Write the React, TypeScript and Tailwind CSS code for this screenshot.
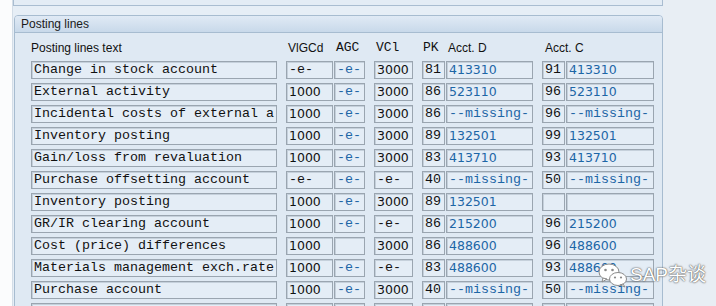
import React from "react"

type Cell = { v: string; blue?: boolean; kind?: "mono" | "num" }

const cols = [
  { w: "w-[246px]", ml: "ml-0" },
  { w: "w-[47px]", ml: "ml-[9px]" },
  { w: "w-[31px]", ml: "ml-[1px]" },
  { w: "w-[39px]", ml: "ml-[9px]" },
  { w: "w-[23px]", ml: "ml-[9px]" },
  { w: "w-[87px]", ml: "ml-[1px]" },
  { w: "w-[23px]", ml: "ml-[9px]" },
  { w: "w-[88px]", ml: "ml-[1px]" },
]

const e = (blue = false): Cell => ({ v: "-e-", blue, kind: "mono" })
const n = (v: string, blue = false): Cell => ({ v, blue, kind: "num" })
const m = (): Cell => ({ v: "--missing-", blue: true, kind: "mono" })
const pk = (v: string): Cell => ({ v, kind: "mono" })
const t = (v: string): Cell => ({ v, kind: "mono" })
const x: Cell = { v: "" }

const rows: Cell[][] = [
  [t("Change in stock account"), e(), e(true), n("3000"), pk("81"), n("413310", true), pk("91"), n("413310", true)],
  [t("External activity"), n("1000"), e(true), n("3000"), pk("86"), n("523110", true), pk("96"), n("523110", true)],
  [t("Incidental costs of external a"), n("1000"), e(true), n("3000"), pk("86"), m(), pk("96"), m()],
  [t("Inventory posting"), n("1000"), e(true), n("3000"), pk("89"), n("132501", true), pk("99"), n("132501", true)],
  [t("Gain/loss from revaluation"), n("1000"), e(true), n("3000"), pk("83"), n("413710", true), pk("93"), n("413710", true)],
  [t("Purchase offsetting account"), e(), e(true), e(), pk("40"), m(), pk("50"), m()],
  [t("Inventory posting"), n("1000"), e(true), n("3000"), pk("89"), n("132501", true), x, x],
  [t("GR/IR clearing account"), n("1000"), e(true), e(), pk("86"), n("215200", true), pk("96"), n("215200", true)],
  [t("Cost (price) differences"), n("1000"), x, n("3000"), pk("86"), n("488600", true), pk("96"), n("488600", true)],
  [t("Materials management exch.rate"), n("1000"), e(true), e(), pk("83"), n("488600", true), pk("93"), n("488600", true)],
  [t("Purchase account"), n("1000"), e(true), n("3000"), pk("40"), m(), pk("50"), m()],
  [x, x, x, x, x, x, x, x],
]

const Field = ({ cell, w, ml }: { cell: Cell; w: string; ml: string }) => (
  <div
    className={`${w} ${ml} h-[18px] shrink-0 overflow-hidden whitespace-nowrap border border-[#9aa5b0] bg-[#e4edf6] pl-[2px] shadow-[inset_1px_1px_0_#c5d0db] leading-[16px] ${
      cell.blue ? "text-[#1d66a6]" : "text-[#111]"
    } ${
      cell.kind === "num"
        ? "font-['DejaVu_Sans',sans-serif] text-[12.5px]"
        : "font-['Liberation_Mono',monospace] text-[13.33px]"
    }`}
  >
    {cell.v}
  </div>
)

const WeChat = () => (
  <svg width="30" height="26" viewBox="0 0 30 26">
    <ellipse cx="11" cy="10" rx="10" ry="8" fill="#fff" stroke="#8a8a8a" strokeWidth="1" />
    <path d="M5 16 L4 20 L9 17 Z" fill="#fff" stroke="#8a8a8a" strokeWidth="1" />
    <circle cx="7.5" cy="8" r="1.3" fill="#8a8a8a" />
    <circle cx="14.5" cy="8" r="1.3" fill="#8a8a8a" />
    <ellipse cx="20" cy="17" rx="8.5" ry="6.5" fill="#fff" stroke="#8a8a8a" strokeWidth="1" />
    <path d="M25 22 L27 25 L22 23 Z" fill="#fff" stroke="#8a8a8a" strokeWidth="1" />
    <circle cx="17" cy="15.5" r="1.1" fill="#8a8a8a" />
    <circle cx="23" cy="15.5" r="1.1" fill="#8a8a8a" />
  </svg>
)

export default function App() {
  return (
    <div className="relative flex h-[306px] w-[716px] overflow-hidden bg-[#e8eef4]">
      <div className="w-[13px] shrink-0 border-r border-[#d3dde7] bg-[#fbfcfd]" />

      <div className="flex w-[650px] shrink-0 flex-col bg-[#e6eef6]">
        <div className="h-[6px] shrink-0 border-x border-b border-[#a9bdd1] bg-[#e3ecf5]" />

        <div className="ml-[1px] mt-[9px] flex flex-1 flex-col rounded-t-[4px] border border-[#a7bcd0] bg-[#dfe9f3]">
          <div className="h-[17px] shrink-0 rounded-t-[3px] border-b border-[#a7bcd0] bg-gradient-to-b from-[#e0eaf5] to-[#c8d9ea] pl-[6px] font-['Liberation_Sans',sans-serif] text-[12px] leading-[16px] text-[#1a1a1a]">
            Posting lines
          </div>

          <div className="flex flex-col pl-[16px]">
            <div className="flex h-[28px] items-end pb-[6px] text-[12px] leading-[14px] text-[#111]">
              <div className="w-[257px] shrink-0 font-['Liberation_Sans',sans-serif]">Posting lines text</div>
              <div className="w-[47px] shrink-0 font-['Liberation_Sans',sans-serif]">VlGCd</div>
              <div className="w-[41px] shrink-0 pl-[1px] font-['Liberation_Mono',monospace] text-[13px]">AGC</div>
              <div className="w-[47px] shrink-0 font-['Liberation_Mono',monospace] text-[13px]">VCl</div>
              <div className="w-[25px] shrink-0 font-['Liberation_Mono',monospace] text-[13px]">PK</div>
              <div className="w-[96px] shrink-0 font-['Liberation_Sans',sans-serif]">Acct. D</div>
              <div className="shrink-0 pl-[1px] font-['Liberation_Sans',sans-serif]">Acct. C</div>
            </div>

            <div className="flex flex-col gap-[4px]">
              {rows.map((row, i) => (
                <div key={i} className="flex">
                  {row.map((cell, j) => (
                    <Field key={j} cell={cell} w={cols[j].w} ml={cols[j].ml} />
                  ))}
                </div>
              ))}
            </div>
          </div>
        </div>
      </div>

      <div className="pointer-events-none absolute left-[598px] top-[262px] flex items-center gap-[2px]">
        <WeChat />
        <span className="font-['Liberation_Sans','Noto_Sans_CJK_SC',sans-serif] text-[19px] leading-[22px] text-white [text-shadow:0_0_2px_#555,0_0_1px_#555]">
          SAP杂谈
        </span>
      </div>
    </div>
  )
}
